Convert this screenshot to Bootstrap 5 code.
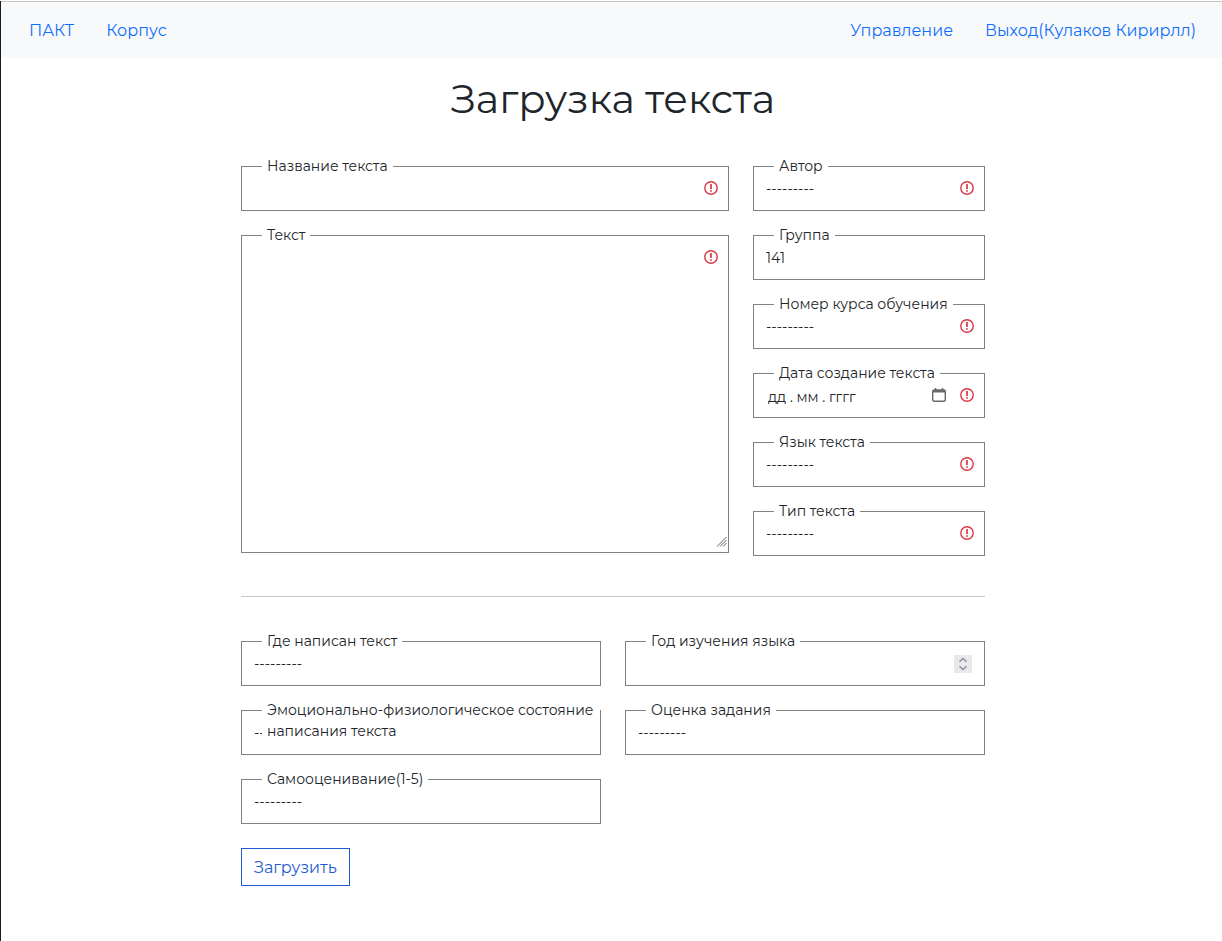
<!DOCTYPE html>
<html lang="ru">
<head>
<meta charset="utf-8">
<meta name="viewport" content="width=device-width, initial-scale=1">
<title>Загрузка текста</title>
<link href="https://cdn.jsdelivr.net/npm/bootstrap@5.3.0/dist/css/bootstrap.min.css" rel="stylesheet">
<style>
  :root { --line: #808080; --alert-icon: url("data:image/svg+xml,%3Csvg xmlns='http://www.w3.org/2000/svg' viewBox='0 0 14 14' fill='none' stroke='%23dc3545'%3E%3Ccircle cx='7' cy='7' r='6.2' stroke-width='1.4'/%3E%3Cpath d='M7 3v5M7 9.200v1.600' stroke-width='1.700'/%3E%3C/svg%3E"); }
  body { font-family: Montserrat, Inter, sans-serif; font-size: 16px; color: #212529; }
  .page-frame { border-left: 1px solid #1c1b22; }
  .site-nav { background: #f8f9fa; border-top: 1px solid #c5c5c5; margin-top: 1px; padding-right: 10px; }
  .site-nav .nav-link { color: #0d6efd; padding-top: 9px; padding-bottom: 7px; }
  .page-body { padding-left: 3px; }
  .upload-form { max-width: 768px; padding: 17px 12px 24px; }
  .page-title { font-size: 40px; font-weight: 400; line-height: 48px; margin-bottom: 43px; }
  .outlined { position: relative; margin-bottom: 24px; }
  .outlined label { position: absolute; left: 21px; top: -10px; max-width: calc(100% - 22px); padding: 0 5px; background: #fff; font-size: 14px; line-height: 21px; }
  .outlined .form-control { appearance: none; display: block; height: 45px; padding: 12px 12px 10px; border: 1px solid var(--line); border-radius: 0; font-size: 14px; line-height: 21px; color: #212529; }
  .outlined select.form-control { padding-right: 40px; }
  .outlined textarea.form-control { height: 318px; }
  .outlined textarea::-webkit-resizer { background: url("data:image/svg+xml,%3Csvg xmlns='http://www.w3.org/2000/svg' viewBox='0 0 15 15'%3E%3Cpath d='M4 9.500l9.500-9.500M7 9.500l6.500-6.500M10 9.500l3.500-3.500' stroke='%23666'/%3E%3C/svg%3E") no-repeat; }
  .outlined .needs-value { background: #fff var(--alert-icon) right 10px top 14px / 14px 14px no-repeat; }
  .outlined .date-value { padding-left: 14px; }
  .outlined input::-webkit-inner-spin-button { appearance: none; }
  .field-tool { position: absolute; display: flex; padding: 0; border: 0; }
  .calendar-tool { right: 39px; top: 15px; background: none; }
  .stepper-tool { right: 13px; top: 14px; background: #e9e9ed; }
  .divider { margin: 40px 0 44px; color: #212529; opacity: .25; }
  .fields-top .outlined:last-child { margin-bottom: 0; }
  .btn-upload { --bs-btn-color: #1d5bd0; --bs-btn-border-color: #1d5bd0; --bs-btn-border-radius: 0; --bs-btn-hover-bg: #1d5bd0; --bs-btn-hover-color: #fff; padding-top: 7px; padding-bottom: 5px; }
</style>
</head>
<body>
<div class="page-frame min-vh-100">
  <nav class="site-nav ps-2">
    <div class="d-flex flex-wrap justify-content-between py-2 ps-1">
      <div class="nav">
        <a class="nav-link" href="#">ПАКТ</a>
        <a class="nav-link" href="#">Корпус</a>
      </div>
      <div class="nav">
        <a class="nav-link" href="#">Управление</a>
        <a class="nav-link" href="#">Выход(Кулаков Кирирлл)</a>
      </div>
    </div>
  </nav>

  <main class="page-body">
    <form class="upload-form mx-auto">
      <h1 class="page-title text-center">Загрузка текста</h1>
      <div class="row fields-top">
        <div class="col-md-8">
          <div class="outlined">
            <input class="form-control needs-value" type="text" id="title">
            <label for="title">Название текста</label>
          </div>
          <div class="outlined">
            <textarea class="form-control needs-value" id="text"></textarea>
            <label for="text">Текст</label>
          </div>
        </div>
        <div class="col-md-4">
          <div class="outlined">
            <select class="form-control needs-value" id="author"><option>---------</option></select>
            <label for="author">Автор</label>
          </div>
          <div class="outlined">
            <select class="form-control" id="group"><option>141</option></select>
            <label for="group">Группа</label>
          </div>
          <div class="outlined">
            <select class="form-control needs-value" id="course"><option>---------</option></select>
            <label for="course">Номер курса обучения</label>
          </div>
          <div class="outlined">
            <input class="form-control needs-value date-value" type="text" id="date" value="дд . мм . гггг">
            <label for="date">Дата создание текста</label>
            <button class="field-tool calendar-tool" type="button" aria-label="Календарь">
              <svg width="14" height="14" viewBox="0 0 14 14" fill="none" stroke="#68686f"><rect x=".7" y="2" width="12.600" height="11.300" rx="1.500" stroke-width="1.400"/><path d="M1 3.200h12" stroke-width="2.600"/><path d="M3.500 0v2M10.500 0v2" stroke-width="1.500"/></svg>
            </button>
          </div>
          <div class="outlined">
            <select class="form-control needs-value" id="language"><option>---------</option></select>
            <label for="language">Язык текста</label>
          </div>
          <div class="outlined">
            <select class="form-control needs-value" id="kind"><option>---------</option></select>
            <label for="kind">Тип текста</label>
          </div>
        </div>
      </div>

      <hr class="divider">

      <div class="row">
        <div class="col-md-6">
          <div class="outlined">
            <select class="form-control" id="place"><option>---------</option></select>
            <label for="place">Где написан текст</label>
          </div>
        </div>
        <div class="col-md-6">
          <div class="outlined">
            <input class="form-control" type="number" id="year">
            <label for="year">Год изучения языка</label>
            <button class="field-tool stepper-tool" type="button" aria-label="Изменить год">
              <svg width="18" height="18" viewBox="0 0 18 18" fill="none" stroke="#8f8f9d" stroke-width="1.500"><path d="M5.500 6.700L9 3.500l3.500 3.200M5.500 11.300L9 14.500l3.500-3.200"/></svg>
            </button>
          </div>
        </div>
        <div class="col-md-6">
          <div class="outlined">
            <select class="form-control" id="state"><option>---------</option></select>
            <label for="state">Эмоционально-физиологическое состояние написания текста</label>
          </div>
        </div>
        <div class="col-md-6">
          <div class="outlined">
            <select class="form-control" id="grade"><option>---------</option></select>
            <label for="grade">Оценка задания</label>
          </div>
        </div>
        <div class="col-md-6">
          <div class="outlined">
            <select class="form-control" id="self"><option>---------</option></select>
            <label for="self">Самооценивание(1-5)</label>
          </div>
        </div>
      </div>
      <button class="btn btn-upload" type="submit">Загрузить</button>
    </form>
  </main>
</div>
<script src="https://cdn.jsdelivr.net/npm/bootstrap@5.3.0/dist/js/bootstrap.bundle.min.js"></script>
</body>
</html>
